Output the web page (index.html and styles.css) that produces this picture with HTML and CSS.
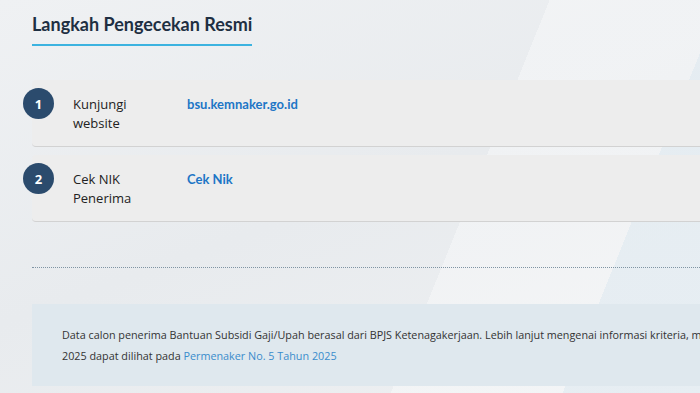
FILE: index.html
```html
<!DOCTYPE html>
<html lang="id">
<head>
    <meta charset="UTF-8">
    <meta name="viewport" content="width=device-width, initial-scale=1.0">
    <title>Langkah Pengecekan Resmi</title>
    <link rel="stylesheet" href="styles.css">
</head>
<body>
    <div class="page">
        <h2 class="section_title">Langkah Pengecekan Resmi</h2>

        <div class="steps">
            <div class="step_card">
                <span class="step_num">1</span>
                <p class="step_label">Kunjungi<br>website</p>
                <a class="step_link" href="#">bsu.kemnaker.go.id</a>
            </div>
            <div class="step_card">
                <span class="step_num">2</span>
                <p class="step_label">Cek NIK<br>Penerima</p>
                <a class="step_link" href="#">Cek Nik</a>
            </div>
        </div>

        <hr class="divider">

        <div class="info_box">
            <p class="info_text">Data calon penerima Bantuan Subsidi Gaji/Upah berasal dari BPJS Ketenagakerjaan. Lebih lanjut mengenai informasi kriteria, mekanisme, dan jadwal penyaluran BSU<br>2025 dapat dilihat pada <a href="#">Permenaker No. 5 Tahun 2025</a></p>
        </div>
    </div>
</body>
</html>
```

FILE: styles.css
```css
body {
    margin: 0;
    padding: 0;
    overflow: hidden;
    font-family: 'Open Sans', sans-serif;
    background-color: #eef0f2;
    background-image:
        linear-gradient(112deg, rgba(255, 255, 255, 0) 64%, rgba(255, 255, 255, 0.35) 64%, rgba(255, 255, 255, 0.35) 84%, rgba(228, 237, 243, 0.7) 84%),
        linear-gradient(160deg, #eff1f3 0%, #e8ebee 50%, #eef0f2 100%);
    min-height: 393px;
}

.page {
    width: 1000px;
    padding: 11px 0 0 32px;
}

.section_title {
    display: inline-block;
    margin: 0;
    padding-bottom: 7px;
    font-family: 'Lato', sans-serif;
    font-size: 18px;
    font-weight: 700;
    line-height: 26px;
    color: #1e2f42;
    border-bottom: 2px solid #3cb3e0;
}

.steps {
    margin-top: 34px;
    display: flex;
    flex-direction: column;
    gap: 8px;
}

.step_card {
    display: flex;
    align-items: flex-start;
    min-height: 67px;
    box-sizing: border-box;
    padding-top: 15px;
    background-color: #ededed;
    border-radius: 4px 0 0 4px;
    border-bottom: 1px solid #d2d2d2;
}

.step_num {
    width: 31px;
    height: 31px;
    margin: -7px 0 0 -9px;
    flex-shrink: 0;
    border-radius: 50%;
    background-color: #2b4b6d;
    color: #fff;
    font-size: 13px;
    font-weight: 700;
    display: flex;
    align-items: center;
    justify-content: center;
}

.step_label {
    margin: 0 0 0 19px;
    width: 114px;
    font-size: 13px;
    line-height: 19px;
    color: #222;
}

.step_link {
    font-family: 'Lato', sans-serif;
    font-size: 13px;
    line-height: 19px;
    font-weight: 700;
    color: #1d76c6;
    text-decoration: none;
}

.divider {
    margin: 45px 0 0 0;
    border: none;
    border-top: 1px dotted #7f94a3;
    height: 0;
}

.info_box {
    margin-top: 36px;
    padding: 20px 30px;
    background-color: #dfe8ee;
}

.info_text {
    margin: 0;
    font-size: 10.8px;
    line-height: 21px;
    color: #333;
}

.info_text a {
    color: #3a8ccc;
    text-decoration: none;
}
```
